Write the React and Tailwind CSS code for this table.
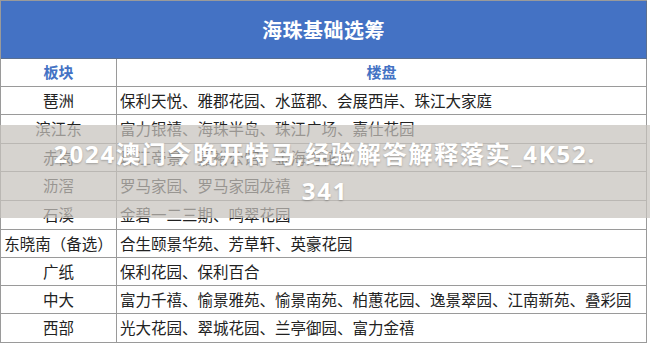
import React from 'react';

const rows = [
  { area: '琶洲', homes: '保利天悦、雅郡花园、水蓝郡、会展西岸、珠江大家庭', h: 'h-[28px]' },
  { area: '滨江东', homes: '富力银禧、海珠半岛、珠江广场、嘉仕花园', h: 'h-[29px]' },
  { area: '赤岗', homes: '珠江帝景、嘉裕公馆、金海湾花园', h: 'h-[28px]' },
  { area: '沥滘', homes: '罗马家园、罗马家园龙禧', h: 'h-[29px]' },
  { area: '石溪', homes: '金碧一二三期、鸣翠花园', h: 'h-[29px]' },
  { area: '东晓南（备选）', homes: '合生颐景华苑、芳草轩、英豪花园', h: 'h-[28px]' },
  { area: '广纸', homes: '保利花园、保利百合', h: 'h-[28px]' },
  { area: '中大', homes: '富力千禧、愉景雅苑、愉景南苑、柏蕙花园、逸景翠园、江南新苑、叠彩园', h: 'h-[28px]' },
  { area: '西部', homes: '光大花园、翠城花园、兰亭御园、富力金禧', h: 'h-[29px]' },
];

export default function App() {
  return (
    <div className="relative w-[650px] h-[345px] overflow-hidden bg-white font-['Noto_Sans_CJK_SC','Noto_Sans',sans-serif]">
      {/* 表格 */}
      <div className="w-[647px] border-l border-t border-[#9a9a9a]">
        <div className="h-[58px] bg-[#4472c4] border-r border-b border-[#5a6f90] flex items-center justify-center">
          <span className="text-[20px] font-bold text-white tracking-[0.5px]">海珠基础选筹</span>
        </div>
        <div className="grid grid-cols-[116px_1fr] h-[28px] border-b border-[#9a9a9a]">
          <div className="border-r border-[#9a9a9a] flex items-center justify-center text-[15px] font-bold text-[#4472c4]">
            板块
          </div>
          <div className="border-r border-[#9a9a9a] flex items-center justify-center text-[15px] font-bold text-[#4472c4]">
            楼盘
          </div>
        </div>
        {rows.map((r) => (
          <div key={r.area} className={`grid grid-cols-[116px_1fr] border-b border-[#9a9a9a] ${r.h}`}>
            <div className="border-r border-[#9a9a9a] flex items-center justify-center text-[15.5px] text-[#222] whitespace-nowrap">
              {r.area}
            </div>
            <div className="border-r border-[#9a9a9a] flex items-center pl-[3px] text-[15.5px] text-[#222] whitespace-nowrap">
              {r.homes}
            </div>
          </div>
        ))}
      </div>

      {/* 水印标题 */}
      <div className="absolute left-0 right-0 top-[125px] h-[93px] bg-[rgba(198,194,188,0.72)] flex items-center justify-center">
        <p className="text-center whitespace-nowrap text-[24px] leading-[37px] font-bold text-white tracking-[1.8px] font-['Noto_Sans','Noto_Sans_CJK_SC',sans-serif] [text-shadow:0_1px_2px_rgba(0,0,0,0.25)]">
          2024澳门今晚开特马,经验解答解释落实_4K52.
          <br />
          341
        </p>
      </div>
    </div>
  );
}
